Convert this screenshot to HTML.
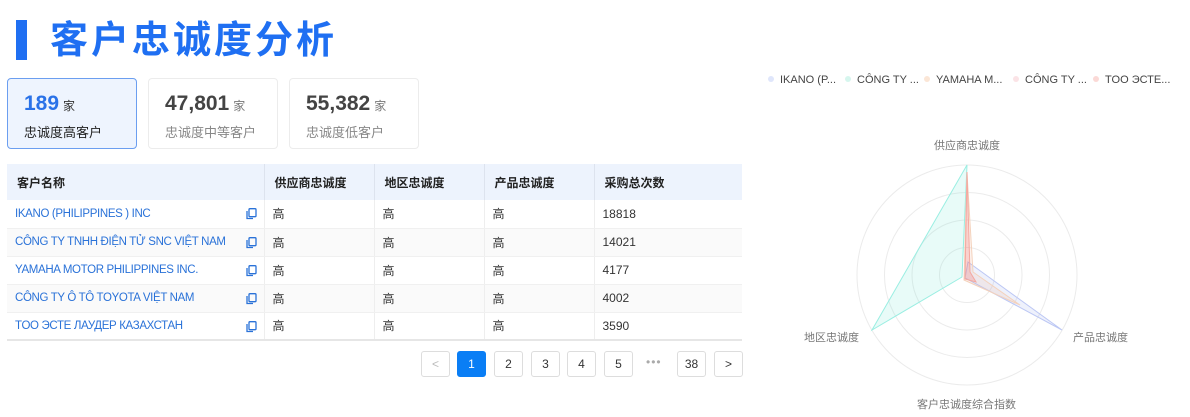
<!DOCTYPE html>
<html><head><meta charset="utf-8"><style>
*{margin:0;padding:0;box-sizing:border-box}
body{width:1190px;height:417px;background:#fff;font-family:"Liberation Sans","Noto Sans CJK SC",sans-serif;position:relative;overflow:hidden;color:#333}
.abs{position:absolute}
.bar{left:16px;top:20px;width:11px;height:40px;background:#1f6ff2}
.title{left:50px;top:16px;font-size:38px;font-weight:bold;color:#1f6ff2;line-height:50px;letter-spacing:3px}
.card{top:78px;height:71px;border:1px solid #ececec;border-radius:4px;background:#fff}
.card .n{position:absolute;left:16px;top:13px;font-size:21px;color:#444;font-weight:bold}
.card .n span{font-size:12px;color:#777;margin-left:4px;font-weight:normal}
.card .l{position:absolute;left:16px;top:43px;font-size:13px;color:#888}
table{position:absolute;left:7px;top:164px;width:735px;border-collapse:collapse;font-size:12px}
th{background:#edf3fd;height:36px;text-align:left;padding-left:10px;font-weight:bold;color:#222;border-left:1px solid #dde3ee}
th:first-child{border-left:none}
td{height:28px;padding-left:8px;border-left:1px solid #eee;border-bottom:1px solid #f0f0f0;color:#333}
td:first-child{border-left:none;color:#2a72d8;position:relative;font-size:11.5px;letter-spacing:-0.35px;white-space:nowrap}
tr:nth-child(even) td{background:#fafafa}
tbody tr:last-child td{border-bottom:2px solid #e6e6e6}
.cp{position:absolute;right:7px;top:8px;width:11px;height:12px}
.pg{top:351px;width:29px;height:26px;border:1px solid #ddd;border-radius:3px;font-size:12px;text-align:center;line-height:24px;color:#333;background:#fff}
.lg{top:74px;font-size:11px;color:#444}
.dot{display:inline-block;width:6px;height:6px;border-radius:3px;margin-right:6px;vertical-align:1px}
.rl{font-size:11px;color:#777}
</style></head><body>
<div class="abs bar"></div>
<div class="abs title">客户忠诚度分析</div>

<div class="abs card" style="left:7px;width:130px;background:#eef4fe;border-color:#6b9ef0">
<div class="n" style="color:#2a72e8">189<span style="color:#333">家</span></div><div class="l" style="color:#222">忠诚度高客户</div></div>
<div class="abs card" style="left:148px;width:130px"><div class="n">47,801<span>家</span></div><div class="l">忠诚度中等客户</div></div>
<div class="abs card" style="left:289px;width:130px"><div class="n">55,382<span>家</span></div><div class="l">忠诚度低客户</div></div>

<table>
<colgroup><col style="width:257px"><col style="width:110px"><col style="width:110px"><col style="width:110px"><col></colgroup>
<thead><tr><th>客户名称</th><th>供应商忠诚度</th><th>地区忠诚度</th><th>产品忠诚度</th><th>采购总次数</th></tr></thead>
<tbody>
<tr><td>IKANO (PHILIPPINES ) INC<svg class="cp" viewBox="0 0 11 12"><rect x="3" y="0.7" width="7" height="8" rx="1" fill="none" stroke="#2a72d8" stroke-width="1.3"/><path d="M1 3v7.5h6" fill="none" stroke="#2a72d8" stroke-width="1.3"/></svg></td><td>高</td><td>高</td><td>高</td><td>18818</td></tr>
<tr><td>CÔNG TY TNHH ĐIỆN TỬ SNC VIỆT NAM<svg class="cp" viewBox="0 0 11 12"><rect x="3" y="0.7" width="7" height="8" rx="1" fill="none" stroke="#2a72d8" stroke-width="1.3"/><path d="M1 3v7.5h6" fill="none" stroke="#2a72d8" stroke-width="1.3"/></svg></td><td>高</td><td>高</td><td>高</td><td>14021</td></tr>
<tr><td>YAMAHA MOTOR PHILIPPINES INC.<svg class="cp" viewBox="0 0 11 12"><rect x="3" y="0.7" width="7" height="8" rx="1" fill="none" stroke="#2a72d8" stroke-width="1.3"/><path d="M1 3v7.5h6" fill="none" stroke="#2a72d8" stroke-width="1.3"/></svg></td><td>高</td><td>高</td><td>高</td><td>4177</td></tr>
<tr><td>CÔNG TY Ô TÔ TOYOTA VIỆT NAM<svg class="cp" viewBox="0 0 11 12"><rect x="3" y="0.7" width="7" height="8" rx="1" fill="none" stroke="#2a72d8" stroke-width="1.3"/><path d="M1 3v7.5h6" fill="none" stroke="#2a72d8" stroke-width="1.3"/></svg></td><td>高</td><td>高</td><td>高</td><td>4002</td></tr>
<tr><td>TOO ЭСТЕ ЛАУДЕР КАЗАХСТАН<svg class="cp" viewBox="0 0 11 12"><rect x="3" y="0.7" width="7" height="8" rx="1" fill="none" stroke="#2a72d8" stroke-width="1.3"/><path d="M1 3v7.5h6" fill="none" stroke="#2a72d8" stroke-width="1.3"/></svg></td><td>高</td><td>高</td><td>高</td><td>3590</td></tr>
</tbody></table>

<div class="abs pg" style="left:421px;color:#bbb">&lt;</div>
<div class="abs pg" style="left:457px;background:#0a7ef5;border-color:#0a7ef5;color:#fff">1</div>
<div class="abs pg" style="left:494px">2</div>
<div class="abs pg" style="left:531px">3</div>
<div class="abs pg" style="left:567px">4</div>
<div class="abs pg" style="left:604px">5</div>
<div class="abs" style="left:646px;top:355px;font-size:12px;color:#aaa;letter-spacing:1px">•••</div>
<div class="abs pg" style="left:677px">38</div>
<div class="abs pg" style="left:714px">&gt;</div>

<div class="abs lg" style="left:768px"><span class="dot" style="background:#dfe6fb"></span>IKANO (P...</div>
<div class="abs lg" style="left:845px"><span class="dot" style="background:#d6f6ee"></span>CÔNG TY ...</div>
<div class="abs lg" style="left:924px"><span class="dot" style="background:#fbe6d6"></span>YAMAHA M...</div>
<div class="abs lg" style="left:1013px"><span class="dot" style="background:#fbe3e6"></span>CÔNG TY ...</div>
<div class="abs lg" style="left:1093px"><span class="dot" style="background:#fbd9d6"></span>TOO ЭСТЕ...</div>

<svg class="abs" style="left:760px;top:60px" width="430" height="357">
<g fill="none" stroke="#ebebeb"><circle cx="207" cy="215" r="27.5"/><circle cx="207" cy="215" r="55"/><circle cx="207" cy="215" r="82.5"/><circle cx="207" cy="215" r="110"/></g>
<polygon points="207,105 112,270 202,217" fill="#6ee6d6" fill-opacity=".16" stroke="#9aeee2" stroke-width="1"/>
<polygon points="208,202 302,270 205,218" fill="#9fb0f0" fill-opacity=".18" stroke="#bcc7f4" stroke-width="1"/>
<polygon points="207,113 213,212 260,245 204,220" fill="#f0b090" fill-opacity=".15" stroke="#f4d2bc" stroke-width="1"/>
<polygon points="207,112 210,212 216,222 205,219" fill="#f07070" fill-opacity=".25" stroke="#f4a8a0" stroke-width="1"/>
</svg>
<div class="abs rl" style="left:934px;top:137px">供应商忠诚度</div>
<div class="abs rl" style="left:804px;top:329px">地区忠诚度</div>
<div class="abs rl" style="left:1073px;top:329px">产品忠诚度</div>
<div class="abs rl" style="left:917px;top:396px">客户忠诚度综合指数</div>
</body></html>
